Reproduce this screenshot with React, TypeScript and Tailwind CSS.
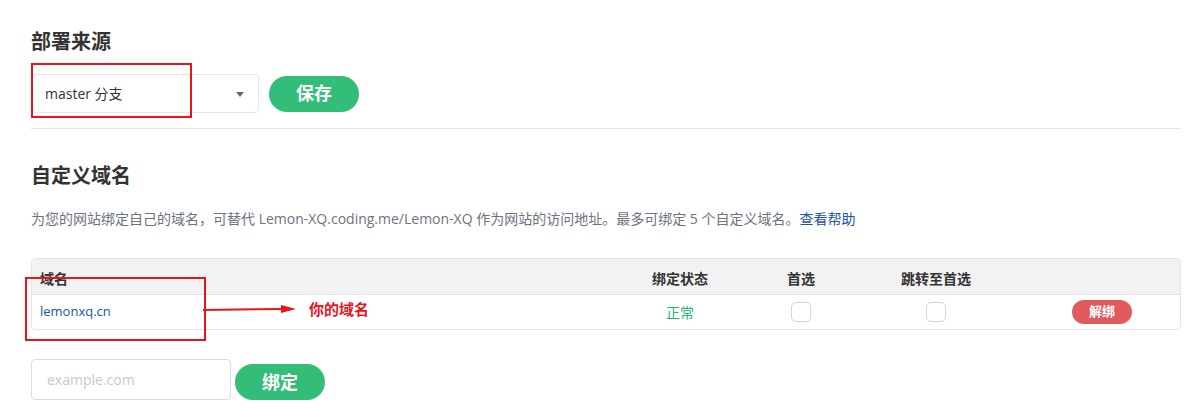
import React from "react";

const font = { fontFamily: '"Open Sans", "Noto Sans CJK SC", sans-serif' };

export default function App() {
  return (
    <div className="relative w-[1187px] h-[410px] bg-white text-[#333]" style={font}>
      <div className="pl-[31px] pr-[6px] pt-[27px]">
        <h2 className="text-[20px] leading-[30px] font-bold text-[#333]">部署来源</h2>
        <div className="mt-[17px] flex items-center gap-[10px]">
          <div className="relative flex h-[39px] w-[228px] items-center rounded-[4px] border border-[#e6e6e6] pl-[13px] text-[14px] text-[#333]">
            master 分支
            <span className="absolute right-[14px] top-[17px] h-0 w-0 border-x-[4px] border-t-[5px] border-x-transparent border-t-[#666]" />
          </div>
          <button className="h-[36px] w-[90px] rounded-full bg-[#33bd78] text-[18px] font-bold text-white">保存</button>
        </div>
        <div className="mt-[15px] h-px bg-[#e5e5e5]" />
        <h2 className="mt-[32px] text-[20px] leading-[30px] font-bold text-[#333]">自定义域名</h2>
        <p className="mt-[18px] text-[14px] leading-[20px] text-[#6b7280]">
          为您的网站绑定自己的域名，可替代 Lemon-XQ.coding.me/Lemon-XQ 作为网站的访问地址。最多可绑定 5 个自定义域名。
          <span className="text-[#2153a6]">查看帮助</span>
        </p>
        <div className="mt-[29px] overflow-hidden rounded-[4px] border border-[#e3e3e3]">
          <div className="grid h-[35px] grid-cols-[587px_122px_120px_150px_1fr] items-center bg-[#f2f2f2] pt-[4px] text-[14px] font-bold text-[#333]">
            <div className="pl-[8px]">域名</div>
            <div className="text-center">绑定状态</div>
            <div className="text-center">首选</div>
            <div className="text-center">跳转至首选</div>
            <div />
          </div>
          <div className="grid h-[35px] grid-cols-[587px_122px_120px_150px_1fr] items-center border-t border-[#e3e3e3] text-[14px]">
            <div className="pl-[8px] text-[13px] text-[#2153a6]">lemonxq.cn</div>
            <div className="text-center text-[#2db36f]">正常</div>
            <div className="flex justify-center">
              <span className="block h-[20px] w-[20px] rounded-[5px] border border-[#d5d5d5] bg-white" />
            </div>
            <div className="flex justify-center">
              <span className="block h-[20px] w-[20px] rounded-[5px] border border-[#d5d5d5] bg-white" />
            </div>
            <div className="flex justify-end pr-[48px]">
              <button className="h-[24px] w-[60px] rounded-full bg-[#e05c5c] text-[13px] font-bold text-white">解绑</button>
            </div>
          </div>
        </div>
        <div className="mt-[29px] flex items-center gap-[4px]">
          <input
            placeholder="example.com"
            className="h-[41px] w-[200px] rounded-[4px] border border-[#dcdcdc] pl-[15px] text-[14px] outline-none placeholder:text-[#c8c8c8]"
          />
          <button className="mt-[5px] h-[36px] w-[90px] rounded-full bg-[#33bd78] text-[18px] font-bold text-white">绑定</button>
        </div>
      </div>

      {/* annotations */}
      <div className="pointer-events-none absolute left-[31px] top-[63px] h-[55px] w-[161px] border-2 border-[#e8141c]" />
      <div className="pointer-events-none absolute left-[25px] top-[277px] h-[64px] w-[181px] border-2 border-[#e8141c]" />
      <svg className="pointer-events-none absolute left-[200px] top-[300px]" width="100" height="20" viewBox="0 0 100 20">
        <line x1="3" y1="10" x2="82" y2="9" stroke="#e8141c" strokeWidth="2" />
        <polygon points="81,5 96,9 81,13" fill="#e8141c" />
      </svg>
      <div className="absolute left-[309px] top-[298px] text-[15px] font-bold leading-[22px] text-[#e8141c]">你的域名</div>
    </div>
  );
}
